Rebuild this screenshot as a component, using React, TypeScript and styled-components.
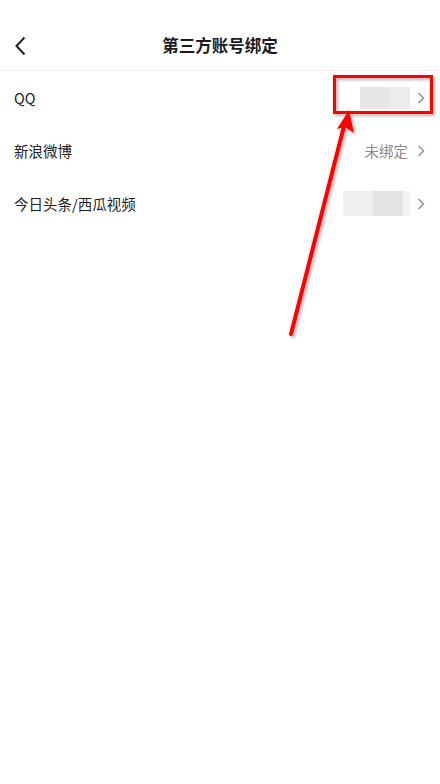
import React from "react";
import styled, { createGlobalStyle } from "styled-components";

const Global = createGlobalStyle`
  html, body { margin: 0; padding: 0; background: #fff; }
  body { font-family: "Noto Sans CJK SC", "Noto Sans", sans-serif; }
  * { box-sizing: border-box; }
`;

const Page = styled.div`
  position: relative;
  width: 440px;
  height: 784px;
  background: #fff;
  overflow: hidden;
`;

const Header = styled.div`
  height: 71px;
  padding-top: 22px;
  display: flex;
  align-items: center;
  justify-content: center;
  position: relative;
  border-bottom: 1px solid #f2f2f2;
`;

const BackBtn = styled.div`
  position: absolute;
  left: 14px;
  top: 35px;
  width: 16px;
  height: 22px;
  display: flex;
  align-items: center;
`;

const Title = styled.div`
  font-size: 16.5px;
  font-weight: 700;
  color: #1a1a1f;
  line-height: 49px;
  margin-top: -2px;
`;

const List = styled.div`
  display: flex;
  flex-direction: column;
`;

const Row = styled.div`
  height: 53px;
  display: flex;
  align-items: center;
  padding: 0 15px 0 14px;
`;

const Label = styled.div`
  flex: 1;
  font-size: 14.5px;
  color: #222;
`;

const Value = styled.div`
  font-size: 14.5px;
  color: #8a8a8a;
  margin-right: 9px;
`;

const Mosaic = styled.div<{ $w: number }>`
  display: flex;
  height: ${(p) => p.$w}px;
  margin-right: 7px;
`;

const Tile = styled.div<{ $w: number; $c: string }>`
  width: ${(p) => p.$w}px;
  height: 100%;
  background: ${(p) => p.$c};
`;

const Chevron = () => (
  <svg width="8" height="12" viewBox="0 0 8 12">
    <path d="M1.5 1 L6.5 6 L1.5 11" fill="none" stroke="#8a8a8a" strokeWidth="1.3" />
  </svg>
);

const Overlay = styled.svg`
  position: absolute;
  left: 0;
  top: 0;
  pointer-events: none;
`;

export default function App() {
  return (
    <Page>
      <Global />
      <Header>
        <BackBtn>
          <svg width="12" height="20" viewBox="0 0 12 20">
            <path d="M10.5 1.5 L2.5 10 L10.5 18.5" fill="none" stroke="#1e1e24" strokeWidth="2" />
          </svg>
        </BackBtn>
        <Title>第三方账号绑定</Title>
      </Header>
      <List>
        <Row>
          <Label>QQ</Label>
          <Mosaic $w={22}>
            <Tile $w={30} $c="#e6e6e6" />
            <Tile $w={20} $c="#ececec" />
          </Mosaic>
          <Chevron />
        </Row>
        <Row>
          <Label>新浪微博</Label>
          <Value>未绑定</Value>
          <Chevron />
        </Row>
        <Row>
          <Label>今日头条/西瓜视频</Label>
          <Mosaic $w={25}>
            <Tile $w={30} $c="#f0f0f0" />
            <Tile $w={30} $c="#e3e3e3" />
            <Tile $w={7} $c="#f3f3f3" />
          </Mosaic>
          <Chevron />
        </Row>
      </List>
      <Overlay width="440" height="784" viewBox="0 0 440 784">
        <defs>
          <filter id="sh" x="-20%" y="-20%" width="140%" height="140%">
            <feDropShadow dx="2" dy="2" stdDeviation="1.5" floodColor="#000" floodOpacity="0.3" />
          </filter>
        </defs>
        <g filter="url(#sh)">
          <rect x="334.5" y="76.5" width="97" height="36" fill="none" stroke="#ff0000" strokeWidth="3" />
          <line x1="291" y1="334" x2="344" y2="126" stroke="#ff0000" strokeWidth="4" strokeLinecap="round" />
          <path d="M349 110 L354 133 L345 127 L337 129 Z" fill="#ff0000" />
        </g>
      </Overlay>
    </Page>
  );
}
